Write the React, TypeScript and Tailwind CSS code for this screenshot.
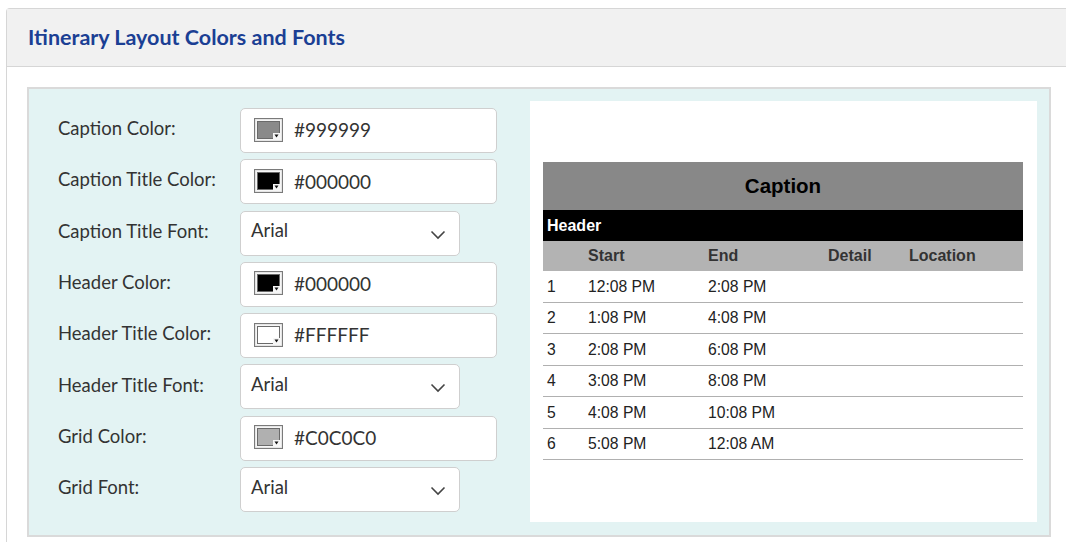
import React from "react";

const Swatch = ({ color }: { color: string }) => (
  <svg width="29" height="24" viewBox="0 0 29 24" className="-mt-[2px] shrink-0">
    <rect x="0.5" y="0.5" width="28" height="23" fill="#d4d4d4" stroke="#7a7a7a" />
    <rect x="1.5" y="1.5" width="26" height="21" fill="#f6f6f6" />
    <rect x="3" y="3" width="23" height="18" fill="#6a6a6a" />
    <path d="M4 4 H25 V15 H19 V20 H4 Z" fill={color} />
    <path d="M19 15 H26 V21 H19 Z" fill="#f6f6f6" />
    <path d="M20.5 16.5 H24.5 L22.5 19.5 Z" fill="#111" />
  </svg>
);

const ColorInput = ({ color, value }: { color: string; value: string }) => (
  <div className="flex h-[45px] w-[257px] items-center rounded-[5px] border border-[#cfcfcf] bg-white pl-[13px]">
    <Swatch color={color} />
    <span className="ml-[11px] text-[19px] text-[#333]">{value}</span>
  </div>
);

const SelectInput = ({ value }: { value: string }) => (
  <div className="flex h-[45px] w-[220px] items-center justify-between rounded-[5px] border border-[#cfcfcf] bg-white pl-[10px] pr-[13px]">
    <span className="-mt-[4px] text-[18.5px] text-[#333]">{value}</span>
    <svg width="16" height="10" viewBox="0 0 16 10" className="mt-[3px]">
      <path d="M1.5 1.5 L8 8 L14.5 1.5" fill="none" stroke="#444" strokeWidth="1.6" />
    </svg>
  </div>
);

const rows: { label: string; kind: "color" | "select"; color?: string; value: string }[] = [
  { label: "Caption Color:", kind: "color", color: "#8a8a8a", value: "#999999" },
  { label: "Caption Title Color:", kind: "color", color: "#000000", value: "#000000" },
  { label: "Caption Title Font:", kind: "select", value: "Arial" },
  { label: "Header Color:", kind: "color", color: "#000000", value: "#000000" },
  { label: "Header Title Color:", kind: "color", color: "#FFFFFF", value: "#FFFFFF" },
  { label: "Header Title Font:", kind: "select", value: "Arial" },
  { label: "Grid Color:", kind: "color", color: "#b0b0b0", value: "#C0C0C0" },
  { label: "Grid Font:", kind: "select", value: "Arial" },
];

const data = [
  ["1", "12:08 PM", "2:08 PM"],
  ["2", "1:08 PM", "4:08 PM"],
  ["3", "2:08 PM", "6:08 PM"],
  ["4", "3:08 PM", "8:08 PM"],
  ["5", "4:08 PM", "10:08 PM"],
  ["6", "5:08 PM", "12:08 AM"],
];

export default function App() {
  return (
    <div className="min-h-[542px] bg-white pl-[6px] pt-[8px]" style={{ fontFamily: "Lato, 'Noto Sans', sans-serif" }}>
      <div className="rounded-tl-[4px] border-l border-t border-[#d6d6d6] pb-[5px]">
        <div className="flex h-[58px] items-center border-b border-[#d6d6d6] bg-[#f1f1f1] pl-[21px]">
          <h1 className="-mt-[1px] text-[21.5px] font-bold text-[#1b3f94]">Itinerary Layout Colors and Fonts</h1>
        </div>
        <div className="pl-[20px] pr-[15px] pt-[20px]">
          <div className="flex h-[450px] border-2 border-[#dadada] bg-[#e3f3f3] pb-[13px] pr-[12px] pt-[12px]">
            <div className="flex w-[501px] shrink-0 flex-col gap-[6.3px] pl-[29px] pt-[7px]">
              {rows.map((r) => (
                <div key={r.label} className="flex h-[45px] items-center">
                  <div className="-mt-[3px] w-[182px] text-[18.5px] text-[#333]">{r.label}</div>
                  {r.kind === "color" ? <ColorInput color={r.color!} value={r.value} /> : <SelectInput value={r.value} />}
                </div>
              ))}
            </div>
            <div className="flex-1 bg-white pl-[13px] pr-[14px] pt-[61px]" style={{ fontFamily: "'Liberation Sans', Arial, sans-serif" }}>
              <div className="flex h-[48px] items-center justify-center bg-[#888888] text-[20.5px] font-bold text-black">Caption</div>
              <div className="flex h-[31px] items-center bg-black pl-[4px] text-[16px] font-bold text-white">Header</div>
              <div className="grid h-[30px] grid-cols-[45px_120px_120px_81px_1fr] items-center bg-[#b3b3b3] text-[16px] font-bold text-[#333]">
                <div />
                <div>Start</div>
                <div>End</div>
                <div>Detail</div>
                <div>Location</div>
              </div>
              {data.map((d) => (
                <div key={d[0]} className="grid h-[31.5px] grid-cols-[45px_120px_120px_81px_1fr] items-center border-b border-[#b0b0b0] pt-[1px] text-[15.7px] text-[#222]">
                  <div className="pl-[4px]">{d[0]}</div>
                  <div>{d[1]}</div>
                  <div>{d[2]}</div>
                  <div />
                  <div />
                </div>
              ))}
            </div>
          </div>
        </div>
      </div>
    </div>
  );
}
